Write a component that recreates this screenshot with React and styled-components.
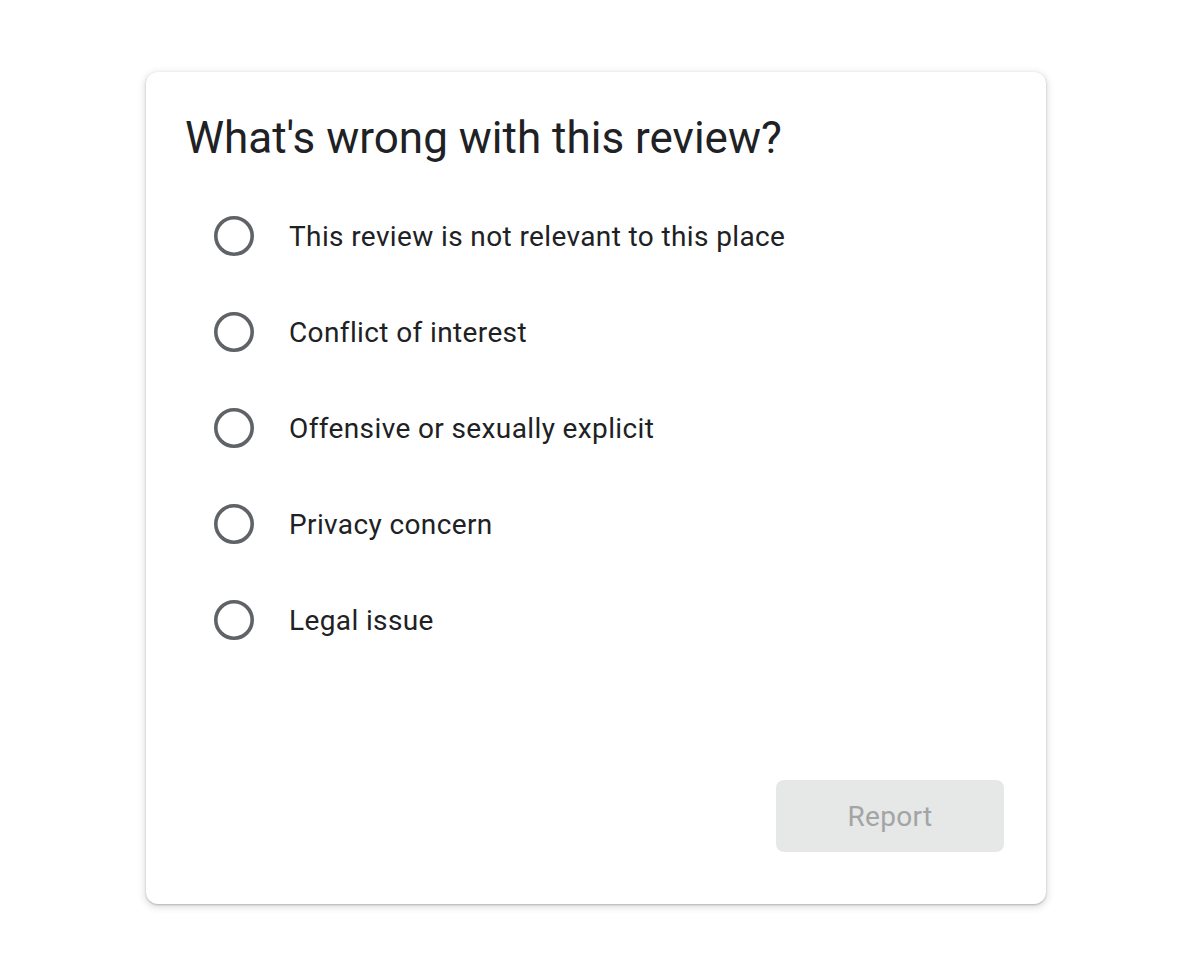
import React from "react";
import styled, { createGlobalStyle } from "styled-components";

const Global = createGlobalStyle`
  html, body { margin: 0; padding: 0; background: #ffffff; }
  body { font-family: Roboto, "Liberation Sans", Arial, sans-serif; color: #202124; }
`;

const Page = styled.div`
  display: flex;
  justify-content: center;
  padding: 72px 0 66px 2px;
`;

const Card = styled.div`
  width: 900px;
  box-sizing: border-box;
  background: #fff;
  border-radius: 12px;
  box-shadow: 0 1px 2px rgba(60, 64, 67, 0.3), 0 2px 6px 2px rgba(60, 64, 67, 0.15);
  padding: 40px 42px 52px 39px;
  display: flex;
  flex-direction: column;
`;

const Title = styled.h1`
  margin: 0;
  font-size: 44px;
  line-height: 52px;
  font-weight: 400;
  color: #202124;
`;

const Options = styled.div`
  margin-top: 24px;
  padding-left: 29px;
  display: flex;
  flex-direction: column;
`;

const Option = styled.label`
  height: 96px;
  display: flex;
  align-items: center;
  gap: 35px;
  cursor: pointer;
`;

const RadioIcon = styled.svg`
  width: 40px;
  height: 40px;
  flex: none;
  display: block;
`;

const OptionText = styled.span`
  font-size: 28px;
  line-height: 40px;
  padding-top: 2px;
  letter-spacing: 0.38px;
  color: #202124;
`;

const Footer = styled.div`
  margin-top: 112px;
  display: flex;
  justify-content: flex-end;
`;

const ReportButton = styled.button`
  width: 228px;
  height: 72px;
  border: none;
  border-radius: 8px;
  background: #e6e7e7;
  color: #a2a4a5;
  font-family: Roboto, "Liberation Sans", Arial, sans-serif;
  font-size: 28px;
  letter-spacing: 0.3px;
  cursor: default;
`;

const options = [
  "This review is not relevant to this place",
  "Conflict of interest",
  "Offensive or sexually explicit",
  "Privacy concern",
  "Legal issue",
];

const Radio = () => (
  <RadioIcon viewBox="0 0 40 40" aria-hidden="true">
    <circle cx="20" cy="20" r="18.2" fill="none" stroke="#5f6368" strokeWidth="3.6" />
  </RadioIcon>
);

export default function App() {
  return (
    <>
      <Global />
      <Page>
        <Card>
          <Title>What's wrong with this review?</Title>
          <Options>
            {options.map((o) => (
              <Option key={o}>
                <Radio />
                <OptionText>{o}</OptionText>
              </Option>
            ))}
          </Options>
          <Footer>
            <ReportButton disabled>Report</ReportButton>
          </Footer>
        </Card>
      </Page>
    </>
  );
}
